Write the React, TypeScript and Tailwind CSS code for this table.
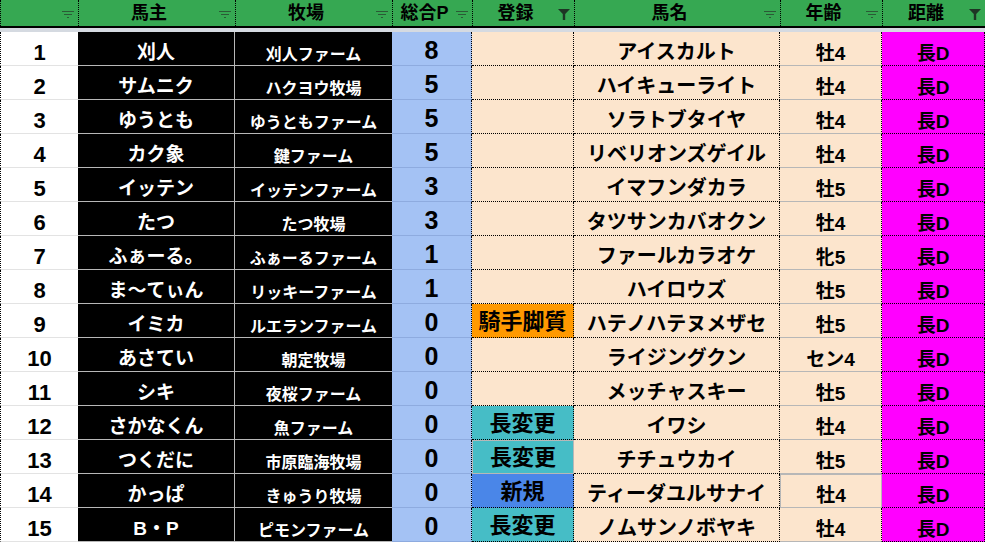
import React from "react";

type Row = {
  rank: number;
  owner: string;
  farm: string;
  pts: number;
  reg: string;
  regKind?: "orange" | "teal" | "blue" | "tealGray";
  name: string;
  age: string;
};

const rows: Row[] = [
  { rank: 1, owner: "刈人", farm: "刈人ファーム", pts: 8, reg: "", name: "アイスカルト", age: "牡4" },
  { rank: 2, owner: "サムニク", farm: "ハクヨウ牧場", pts: 5, reg: "", name: "ハイキューライト", age: "牡4" },
  { rank: 3, owner: "ゆうとも", farm: "ゆうともファーム", pts: 5, reg: "", name: "ソラトブタイヤ", age: "牡4" },
  { rank: 4, owner: "カク象", farm: "鍵ファーム", pts: 5, reg: "", name: "リベリオンズゲイル", age: "牡4" },
  { rank: 5, owner: "イッテン", farm: "イッテンファーム", pts: 3, reg: "", name: "イマフンダカラ", age: "牡5" },
  { rank: 6, owner: "たつ", farm: "たつ牧場", pts: 3, reg: "", name: "タツサンカバオクン", age: "牡4" },
  { rank: 7, owner: "ふぁーる。", farm: "ふぁーるファーム", pts: 1, reg: "", name: "ファールカラオケ", age: "牝5" },
  { rank: 8, owner: "ま〜てぃん", farm: "リッキーファーム", pts: 1, reg: "", name: "ハイロウズ", age: "牡5" },
  { rank: 9, owner: "イミカ", farm: "ルエランファーム", pts: 0, reg: "騎手脚質", regKind: "orange", name: "ハテノハテヌメザセ", age: "牡5" },
  { rank: 10, owner: "あさてい", farm: "朝定牧場", pts: 0, reg: "", name: "ライジングクン", age: "セン4" },
  { rank: 11, owner: "シキ", farm: "夜桜ファーム", pts: 0, reg: "", name: "メッチャスキー", age: "牡5" },
  { rank: 12, owner: "さかなくん", farm: "魚ファーム", pts: 0, reg: "長変更", regKind: "teal", name: "イワシ", age: "牡4" },
  { rank: 13, owner: "つくだに", farm: "市原臨海牧場", pts: 0, reg: "長変更", regKind: "tealGray", name: "チチュウカイ", age: "牡5" },
  { rank: 14, owner: "かっぱ", farm: "きゅうり牧場", pts: 0, reg: "新規", regKind: "blue", name: "ティーダユルサナイ", age: "牡4" },
  { rank: 15, owner: "B・P", farm: "ピモンファーム", pts: 0, reg: "長変更", regKind: "teal", name: "ノムサンノボヤキ", age: "牡4" },
];

const COLS = "grid grid-cols-[78px_157px_157px_80px_102px_206px_102px_103px]";

function SortIcon() {
  return (
    <svg width="12" height="8" viewBox="0 0 12 8" className="mt-[3px] shrink-0">
      <rect x="0" y="0" width="12" height="1" fill="#2b5a36" />
      <rect x="2" y="3" width="8" height="1" fill="#2b5a36" />
      <rect x="5" y="6" width="2" height="1" fill="#2b5a36" />
    </svg>
  );
}

function FunnelIcon() {
  return (
    <svg width="12" height="11" viewBox="0 0 12 11" className="mt-[3px] shrink-0">
      <path d="M0 0 H12 L7.2 5 V11 H4.8 V5 Z" fill="#1e3524" />
    </svg>
  );
}

function HeaderCell({ label, funnel }: { label?: string; funnel?: boolean }) {
  return (
    <div className="flex h-[26px] items-center border-r border-dotted border-black">
      <div className="flex-1 text-center text-[18px] font-bold leading-none text-black">{label ?? ""}</div>
      <div className="mr-[4px] flex items-center">{funnel ? <FunnelIcon /> : <SortIcon />}</div>
    </div>
  );
}

function regBg(kind?: Row["regKind"]) {
  if (kind === "orange") return "bg-[#ff9900]";
  if (kind === "teal" || kind === "tealGray") return "bg-[#46bdc6]";
  if (kind === "blue") return "bg-[#4a86e8]";
  return "bg-[#fce5cd]";
}

export default function App() {
  return (
    <div className="h-[542px] w-[985px] overflow-hidden bg-white [font-family:'Liberation_Sans','Noto_Sans_CJK_JP',sans-serif]">
      <div className={`${COLS} bg-[#36a852] border-l border-dotted border-black`}>
        <HeaderCell />
        <HeaderCell label="馬主" />
        <HeaderCell label="牧場" />
        <HeaderCell label="総合P" />
        <HeaderCell label="登録" funnel />
        <HeaderCell label="馬名" />
        <HeaderCell label="年齢" />
        <HeaderCell label="距離" funnel />
      </div>
      <div className="h-[2px] bg-black" />
      <div className="h-[4px] bg-[#d5dae1]" />
      {rows.map((r) => (
        <div key={r.rank} className={`${COLS} h-[34px]`}>
          <div className="flex items-center justify-center border-b border-l border-b-[#e3e3e3] border-l-black bg-white pt-[8px] text-[22px] font-bold leading-none text-black [border-left-style:dotted]">
            {r.rank}
          </div>
          <div className="flex items-center justify-center border-b border-r border-[#b7b7b7] bg-black pt-[8px] text-[19px] font-bold leading-none text-white">
            {r.owner}
          </div>
          <div className="flex items-center justify-center border-b border-[#b7b7b7] bg-black pt-[12px] text-[16px] font-bold leading-none text-white">
            {r.farm}
          </div>
          <div className="flex items-center justify-center border-b border-r border-b-[#8eabdf] border-r-black bg-[#a4c2f4] pt-[3px] text-[25px] font-bold leading-none text-black [border-right-style:dotted]">
            {r.pts}
          </div>
          <div
            className={`flex items-center justify-center ${regBg(r.regKind)} pt-[2px] text-[22px] font-bold leading-none whitespace-nowrap text-black ${
              r.regKind === "tealGray" ? "border border-[#b7b7b7]" : "border-b border-r border-dotted border-black"
            }`}
          >
            {r.reg}
          </div>
          <div className="flex items-center justify-center border-b border-r border-dotted border-black bg-[#fce5cd] pt-[6px] text-[20px] font-bold leading-none whitespace-nowrap text-black">
            {r.name}
          </div>
          <div
            className={`flex items-center justify-center bg-[#fce5cd] pt-[9px] text-[19px] font-bold leading-none text-black ${
              r.rank === 14
                ? "border border-[#b7b7b7]"
                : "border-b border-r border-b-[#b7b7b7] border-r-black [border-right-style:dotted]"
            }`}
          >
            {r.age}
          </div>
          <div className="flex items-center justify-center border-b border-r border-dotted border-black bg-[#ff00ff] pt-[9px] text-[19px] font-bold leading-none text-black">
            長D
          </div>
        </div>
      ))}
    </div>
  );
}
